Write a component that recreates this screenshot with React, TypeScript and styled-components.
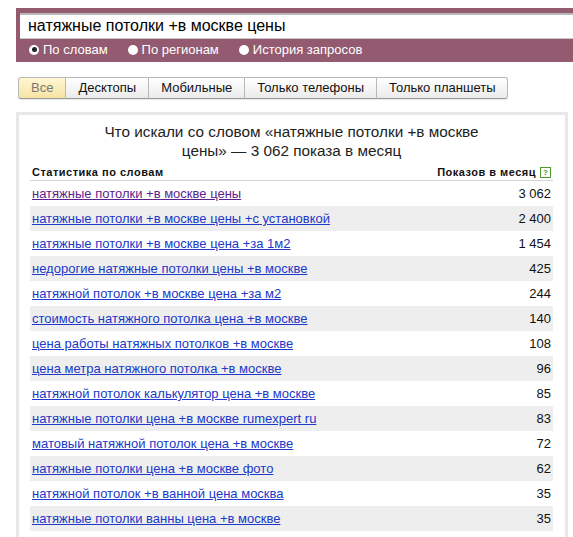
import styled, { createGlobalStyle } from "styled-components";

const GlobalStyle = createGlobalStyle`
  html, body {
    margin: 0;
    padding: 0;
    background: #fff;
    font-family: "Liberation Sans", Arial, sans-serif;
  }
`;

type TRow = {
  phrase: string;
  count: string;
  visited?: boolean;
};

const rows: TRow[] = [
  { phrase: "натяжные потолки +в москве цены", count: "3 062", visited: true },
  { phrase: "натяжные потолки +в москве цены +с установкой", count: "2 400" },
  { phrase: "натяжные потолки +в москве цена +за 1м2", count: "1 454" },
  { phrase: "недорогие натяжные потолки цены +в москве", count: "425" },
  { phrase: "натяжной потолок +в москве цена +за м2", count: "244" },
  { phrase: "стоимость натяжного потолка цена +в москве", count: "140" },
  { phrase: "цена работы натяжных потолков +в москве", count: "108" },
  { phrase: "цена метра натяжного потолка +в москве", count: "96" },
  { phrase: "натяжной потолок калькулятор цена +в москве", count: "85" },
  { phrase: "натяжные потолки цена +в москве rumexpert ru", count: "83" },
  { phrase: "матовый натяжной потолок цена +в москве", count: "72" },
  { phrase: "натяжные потолки цена +в москве фото", count: "62" },
  { phrase: "натяжной потолок +в ванной цена москва", count: "35" },
  { phrase: "натяжные потолки ванны цена +в москве", count: "35" },
];

const tabs = ["Все", "Десктопы", "Мобильные", "Только телефоны", "Только планшеты"];
const modes = ["По словам", "По регионам", "История запросов"];

const App = () => {
  return (
    <>
      <GlobalStyle />
      <Page>
        <SearchBar>
          <SearchInput>натяжные потолки +в москве цены</SearchInput>
          <Modes>
            {modes.map((m, i) => (
              <Mode key={m}>
                <Radio $checked={i === 0} />
                {m}
              </Mode>
            ))}
          </Modes>
        </SearchBar>

        <Tabs>
          {tabs.map((t, i) => (
            <Tab key={t} $active={i === 0}>
              {t}
            </Tab>
          ))}
        </Tabs>

        <Panel>
          <Title>
            Что искали со словом «натяжные потолки +в москве
            <br />
            цены» — 3 062 показа в месяц
          </Title>
          <HeadRow>
            <span>Статистика по словам</span>
            <HeadRight>
              Показов в месяц
              <Help>?</Help>
            </HeadRight>
          </HeadRow>
          {rows.map((r, i) => (
            <Row key={r.phrase} $odd={i % 2 === 1}>
              <Phrase $visited={r.visited}>{r.phrase}</Phrase>
              <Count>{r.count}</Count>
            </Row>
          ))}
        </Panel>
      </Page>
    </>
  );
};

const Page = styled.div`
  padding: 8px 0 0 16px;
`;

const SearchBar = styled.div`
  background: #935a70;
  padding: 5px 0 0 4px;
  height: 54px;
  box-sizing: border-box;
`;

const SearchInput = styled.div`
  background: #fff;
  height: 26px;
  box-sizing: border-box;
  border-top: 2px solid #b9b9b9;
  border-bottom: 1px solid #c8c8c8;
  padding-left: 8px;
  font-size: 16px;
  line-height: 22px;
  color: #000;
  white-space: nowrap;
`;

const Modes = styled.div`
  display: flex;
  align-items: center;
  gap: 20px;
  padding-left: 9px;
  height: 21px;
  font-size: 13px;
  color: #fff;
`;

const Mode = styled.label`
  display: flex;
  align-items: center;
  gap: 4px;
`;

const Radio = styled.span<{ $checked?: boolean }>`
  width: 10px;
  height: 10px;
  border-radius: 50%;
  background: #fff;
  display: inline-block;
  position: relative;
  &::after {
    content: "";
    display: ${(p) => (p.$checked ? "block" : "none")};
    position: absolute;
    left: 2.5px;
    top: 2.5px;
    width: 5px;
    height: 5px;
    border-radius: 50%;
    background: #222;
  }
`;

const Tabs = styled.div`
  display: flex;
  margin: 15px 0 0 2px;
`;

const Tab = styled.div<{ $active?: boolean }>`
  height: 22px;
  box-sizing: border-box;
  padding: 0 12px;
  font-size: 13px;
  line-height: 20px;
  color: ${(p) => (p.$active ? "#777" : "#111")};
  border: 1px solid #b8b8b8;
  border-bottom-color: #999;
  border-left-width: 0;
  background: ${(p) =>
    p.$active
      ? "linear-gradient(#fff6d2, #f7e3a4)"
      : "linear-gradient(#ffffff, #ebebeb)"};
  box-shadow: 0 1px 0 rgba(0, 0, 0, 0.08);
  &:first-child {
    border-left-width: 1px;
    border-radius: 3px 0 0 3px;
  }
  &:last-child {
    border-radius: 0 3px 3px 0;
  }
`;

const Panel = styled.div`
  margin: 13px 5px 0 0;
  border: 3px solid #e8e8e8;
  border-bottom: none;
  padding: 7px 12px 10px 11px;
`;

const Title = styled.div`
  text-align: center;
  font-size: 15.3px;
  line-height: 19px;
  color: #222;
`;

const HeadRow = styled.div`
  display: flex;
  justify-content: space-between;
  align-items: center;
  padding: 5px 2px 1px;
  line-height: 14px;
  font-size: 11px;
  font-weight: bold;
  letter-spacing: 0.5px;
  color: #111;
  border-bottom: 1px solid #d3d3d3;
`;

const HeadRight = styled.span`
  display: flex;
  align-items: center;
  gap: 4px;
`;

const Help = styled.span`
  width: 9px;
  height: 9px;
  border: 1px solid #4f9a2e;
  font-size: 8px;
  line-height: 9px;
  text-align: center;
  color: #4f9a2e;
  font-weight: bold;
  letter-spacing: 0;
`;

const Row = styled.div<{ $odd?: boolean }>`
  display: flex;
  justify-content: space-between;
  align-items: center;
  height: 25px;
  padding: 0 2px;
  font-size: 13px;
  background: ${(p) => (p.$odd ? "#eeeeee" : "transparent")};
`;

const Phrase = styled.a<{ $visited?: boolean }>`
  color: ${(p) => (p.$visited ? "#5d1f8c" : "#2039c8")};
  text-decoration: underline;
  cursor: pointer;
`;

const Count = styled.span`
  color: #111;
`;

export default App;
